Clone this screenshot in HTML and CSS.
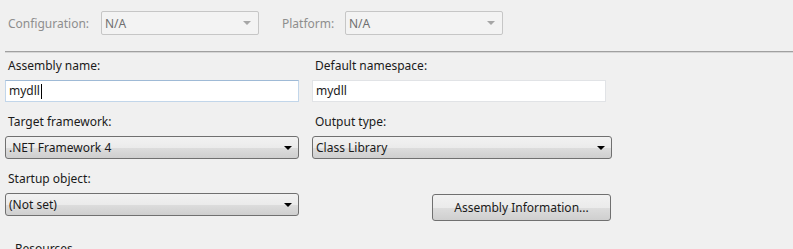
FILE: index.html
```html
<!DOCTYPE html>
<html lang="en">

<head>
    <meta charset="UTF-8">
    <meta name="viewport" content="width=device-width, initial-scale=1.0">
    <title>Application</title>
    <link rel="stylesheet" href="styles.css">
</head>

<body>

    <div class="config-bar">
        <span class="config-label">Configuration:</span>
        <div class="combo disabled">
            <span>N/A</span>
            <span class="arrow"></span>
        </div>
        <span class="config-label platform">Platform:</span>
        <div class="combo disabled">
            <span>N/A</span>
            <span class="arrow"></span>
        </div>
    </div>

    <div class="separator"></div>

    <div class="form">
        <div class="field">
            <label>Assembly name:</label>
            <div class="textbox focused">mydll<span class="caret"></span></div>
        </div>
        <div class="field">
            <label>Default namespace:</label>
            <div class="textbox">mydll</div>
        </div>

        <div class="field">
            <label>Target framework:</label>
            <div class="dropdown">
                <span>.NET Framework 4</span>
                <span class="arrow"></span>
            </div>
        </div>
        <div class="field">
            <label>Output type:</label>
            <div class="dropdown wide">
                <span>Class Library</span>
                <span class="arrow"></span>
            </div>
        </div>

        <div class="field">
            <label>Startup object:</label>
            <div class="dropdown">
                <span>(Not set)</span>
                <span class="arrow"></span>
            </div>
        </div>
        <div class="field button-cell">
            <button>Assembly Information...</button>
        </div>
    </div>

    <!-- group box title, cut off by the bottom of the window -->
    <div class="group-title">Resources</div>

</body>

</html>
```

FILE: styles.css
```css
body {
    font-family: 'Noto Sans', 'Open Sans', sans-serif;
    font-size: 12px;
    margin: 0;
    padding: 0;
    background-color: #f0f0f0;
    color: #1a1a1a;
    height: 249px;
    overflow: hidden;
}

.config-bar {
    display: flex;
    align-items: center;
    padding: 11px 0 0 8px;
    height: 24px;
}

.config-label {
    color: #8e8e8e;
    width: 93px;
}

.config-label.platform {
    width: 63px;
    margin-left: 23px;
}

.combo {
    box-sizing: border-box;
    width: 158px;
    height: 24px;
    display: flex;
    align-items: center;
    justify-content: space-between;
    padding: 0 7px 0 3px;
    border: 1px solid #c6c6c6;
    border-radius: 2px;
    background-color: #f3f3f3;
}

.combo.disabled {
    color: #707070;
}

.combo .arrow {
    border-left: 4px solid transparent;
    border-right: 4px solid transparent;
    border-top: 4px solid #a6a6a6;
}

.separator {
    margin: 16px 0 0 5px;
    border-top: 1px solid #a0a0a0;
    border-bottom: 1px solid #d6d6d6;
}

.form {
    display: grid;
    grid-template-columns: 294px 300px;
    column-gap: 13px;
    padding: 5px 0 0 5px;
}

.field {
    display: flex;
    flex-direction: column;
    margin-bottom: 12px;
}

.field label {
    height: 16px;
    line-height: 16px;
    margin: 0 0 6px 3px;
}

.textbox {
    box-sizing: border-box;
    width: 294px;
    height: 22px;
    line-height: 20px;
    padding-left: 3px;
    background-color: #ffffff;
    border: 1px solid #e1e3e6;
    display: flex;
    align-items: center;
}

.textbox.focused {
    border-color: #c2d6ea;
    border-top-color: #9fbad6;
}

.caret {
    display: inline-block;
    width: 1px;
    height: 15px;
    margin-left: 1px;
    background-color: #000000;
}

.dropdown {
    box-sizing: border-box;
    width: 294px;
    height: 23px;
    display: flex;
    align-items: center;
    justify-content: space-between;
    padding: 0 6px 0 3px;
    border: 1px solid #707070;
    border-radius: 3px;
    background: linear-gradient(#f2f2f2 0%, #ebebeb 50%, #dddddd 51%, #cfcfcf 100%);
}

.dropdown.wide {
    width: 300px;
}

.dropdown .arrow {
    border-left: 4px solid transparent;
    border-right: 4px solid transparent;
    border-top: 4px solid #000000;
}

.button-cell {
    padding: 23px 0 0 120px;
}

button {
    box-sizing: border-box;
    width: 179px;
    height: 27px;
    font-family: inherit;
    font-size: 12px;
    color: #1a1a1a;
    border: 1px solid #707070;
    border-radius: 3px;
    background: linear-gradient(#f2f2f2 0%, #ebebeb 50%, #dddddd 51%, #cfcfcf 100%);
    padding: 0;
}

.group-title {
    margin: 8px 0 0 15px;
    line-height: 16px;
}
```
